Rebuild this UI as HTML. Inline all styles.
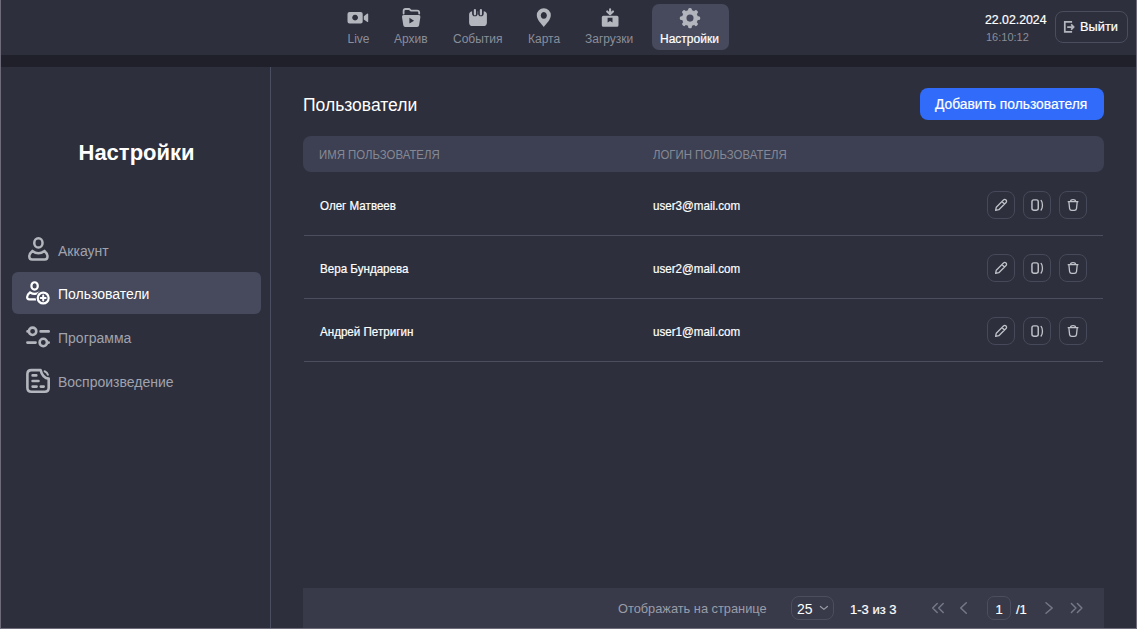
<!DOCTYPE html>
<html><head><meta charset="utf-8">
<style>
*{box-sizing:border-box;margin:0;padding:0}
html,body{width:1137px;height:629px;overflow:hidden;background:#2d2f3c;font-family:"Liberation Sans",sans-serif;}
.a{position:absolute;white-space:nowrap;line-height:1}
#frame{position:absolute;left:0;top:0;width:1137px;height:629px;border:1px solid #6d6b79;border-top:none;pointer-events:none;z-index:50}
#band{position:absolute;left:0;top:55px;width:1137px;height:12px;background:#1f2029}
#sep{position:absolute;left:270px;top:67px;width:1px;height:562px;background:#4a4e60}
.nav{color:#8a8e9a;font-size:12px}
.navact{position:absolute;left:652px;top:4px;width:77px;height:46px;border-radius:7px;background:#464a5c}
.side{color:#a0a3ae;font-size:14px}
.sideact{position:absolute;left:12px;top:272px;width:249px;height:42px;border-radius:6px;background:#464a5c}
.thead{position:absolute;left:303px;top:136px;width:801px;height:36px;border-radius:8px;background:#3d4052}
.th{color:#858995;font-size:12.6px;transform:scaleX(0.905);transform-origin:0 0}
.td{color:#ffffff;font-size:12.2px;-webkit-text-stroke:0.2px #fff;transform:scaleX(0.952);transform-origin:0 0}
.sb{-webkit-text-stroke:0.2px #fff}
.div{position:absolute;left:304px;width:799px;height:1px;background:#4b4e5e}
.btn{position:absolute;width:28px;height:28px;border:1px solid #464959;border-radius:8px}
.footer{position:absolute;left:303px;top:588px;width:801px;height:40px;background:#383a4a}
svg{position:absolute;overflow:visible}
</style></head><body>
<div id="band"></div>
<div id="sep"></div>

<!-- header nav -->
<div class="navact"></div>
<div class="a nav" style="left:347.5px;top:33.4px">Live</div>
<div class="a nav" style="left:394px;top:33.4px">Архив</div>
<div class="a nav" style="left:453px;top:33.4px">События</div>
<div class="a nav" style="left:528px;top:33.4px">Карта</div>
<div class="a nav" style="left:585px;top:33.4px">Загрузки</div>
<div class="a nav sb" style="left:660px;top:33.4px;color:#fff">Настройки</div>

<!-- date/time -->
<div class="a sb" style="left:985px;top:13.6px;font-size:12.3px;color:#fff">22.02.2024</div>
<div class="a" style="left:986px;top:31.5px;font-size:11px;color:#8a8d98">16:10:12</div>
<div class="a" style="left:1055px;top:11px;width:73px;height:32px;border:1px solid #4a4d5e;border-radius:8px"></div>
<div class="a sb" style="left:1080px;top:21px;font-size:12.8px;color:#fff">Выйти</div>

<!-- sidebar -->
<div class="a" style="left:78.5px;top:142.1px;font-size:22px;font-weight:bold;color:#fff">Настройки</div>
<div class="sideact"></div>
<div class="a side" style="left:58px;top:243.6px">Аккаунт</div>
<div class="a side" style="left:58px;top:287.1px;color:#fff">Пользователи</div>
<div class="a side" style="left:58px;top:331.3px">Программа</div>
<div class="a side" style="left:58px;top:375.2px">Воспроизведение</div>

<!-- main -->
<div class="a" style="left:303px;top:97.2px;font-size:17.5px;color:#fff">Пользователи</div>
<div class="a" style="left:920px;top:88px;width:184px;height:32px;border-radius:8px;background:#316bf9"></div>
<div class="a sb" style="left:935px;top:97.9px;font-size:13.8px;color:#fff">Добавить пользователя</div>

<div class="thead"></div>
<div class="a th" style="left:319px;top:149.3px">ИМЯ ПОЛЬЗОВАТЕЛЯ</div>
<div class="a th" style="left:653px;top:149.3px">ЛОГИН ПОЛЬЗОВАТЕЛЯ</div>

<div class="a td" style="left:320px;top:199.6px">Олег Матвеев</div>
<div class="a td" style="left:653px;top:199.6px">user3@mail.com</div>
<div class="div" style="top:235px"></div>
<div class="a td" style="left:320px;top:262.6px">Вера Бундарева</div>
<div class="a td" style="left:653px;top:262.6px">user2@mail.com</div>
<div class="div" style="top:298px"></div>
<div class="a td" style="left:320px;top:325.6px">Андрей Петригин</div>
<div class="a td" style="left:653px;top:325.6px">user1@mail.com</div>
<div class="div" style="top:361px"></div>

<div class="btn" style="left:987px;top:191px"></div>
<div class="btn" style="left:1023px;top:191px"></div>
<div class="btn" style="left:1059px;top:191px"></div>
<div class="btn" style="left:987px;top:254px"></div>
<div class="btn" style="left:1023px;top:254px"></div>
<div class="btn" style="left:1059px;top:254px"></div>
<div class="btn" style="left:987px;top:317px"></div>
<div class="btn" style="left:1023px;top:317px"></div>
<div class="btn" style="left:1059px;top:317px"></div>

<!-- footer -->
<div class="footer"></div>
<div class="a" style="left:618px;top:602.8px;font-size:12.8px;color:#9a9da8">Отображать на странице</div>
<div class="a" style="left:791px;top:596px;width:43px;height:24px;border:1px solid #4b4e5e;border-radius:8px"></div>
<div class="a" style="left:797px;top:602px;font-size:14px;color:#fff">25</div>
<div class="a sb" style="left:850px;top:602.8px;font-size:13px;color:#fff">1-3 из 3</div>
<div class="a" style="left:987px;top:596px;width:24px;height:24px;border:1px solid #4b4e5e;border-radius:7px"></div>
<div class="a sb" style="left:995.5px;top:602.8px;font-size:13px;color:#fff">1</div>
<div class="a sb" style="left:1016px;top:602.8px;font-size:13px;color:#fff">/1</div>

<svg id="ic" width="1137" height="629" viewBox="0 0 1137 629" style="position:absolute;left:0;top:0;z-index:5">
<g fill="#b4b6bd">
<!-- camera -->
<path fill-rule="evenodd" d="M349.5 12h11.2a2 2 0 0 1 2 2v7.6a2 2 0 0 1-2 2h-11.2a2 2 0 0 1-2-2v-7.6a2 2 0 0 1 2-2z M355.1 14.7a2.9 2.9 0 1 0 0.01 0z"/>
<path d="M363.8 16.2L367 13.8Q368.2 13 368.2 14.4V21.2Q368.2 22.6 367 21.8L363.8 19.4Z"/>
<!-- folder -->
<path fill="none" stroke="#b4b6bd" stroke-width="1.8" stroke-linecap="round" stroke-linejoin="round" d="M403.6 13.6V11a2 2 0 0 1 2-2h3.6l1.8 1.6h6.2a2 2 0 0 1 2 2v1"/>
<path fill-rule="evenodd" d="M403.8 15h14.8a1.8 1.8 0 0 1 1.8 2l-1.3 8.2a2 2 0 0 1-2 1.7h-11.8a2 2 0 0 1-2-1.7l-1.3-8.2a1.8 1.8 0 0 1 1.8-2z M409.4 17.8v5.8l4.7-2.9z"/>
<!-- calendar -->
<rect x="469.1" y="11.2" width="17.8" height="14.9" rx="3.6"/>
<rect x="472.1" y="8" width="5.6" height="8.3" rx="2.8" fill="#2d2f3c"/>
<rect x="478.1" y="8" width="5.6" height="8.3" rx="2.8" fill="#2d2f3c"/>
<rect x="473.8" y="8.9" width="2.2" height="6.5" rx="1.1"/>
<rect x="479.8" y="8.9" width="2.2" height="6.5" rx="1.1"/>
<!-- pin -->
<path fill-rule="evenodd" d="M543.8 26.9C541.5 24 536.8 19.8 536.8 15.3a7 7 0 0 1 14 0C550.8 19.8 546.1 24 543.8 26.9z M543.8 12.1a3.05 3.35 0 1 0 0.01 0z"/>
<!-- download -->
<path fill-rule="evenodd" d="M603.3 15.8h13.7a1.5 1.5 0 0 1 1.5 1.5v7.9a1.5 1.5 0 0 1-1.5 1.5h-13.7a1.5 1.5 0 0 1-1.5-1.5v-7.9a1.5 1.5 0 0 1 1.5-1.5z M607.6 17.8v4.8l2.45-1.5 2.45 1.5v-4.8z"/>
<path fill="none" stroke="#b4b6bd" stroke-width="2.1" stroke-linecap="round" stroke-linejoin="round" d="M610.1 9.2v5M607.2 11.4l2.9 2.9 2.9-2.9"/>
<!-- gear -->
<circle cx="690" cy="18.1" r="8.0"/><rect x="688.1" y="7.9" width="3.8" height="5" rx="1.5" transform="rotate(0 690 18.1)"/><rect x="688.1" y="7.9" width="3.8" height="5" rx="1.5" transform="rotate(45 690 18.1)"/><rect x="688.1" y="7.9" width="3.8" height="5" rx="1.5" transform="rotate(90 690 18.1)"/><rect x="688.1" y="7.9" width="3.8" height="5" rx="1.5" transform="rotate(135 690 18.1)"/><rect x="688.1" y="7.9" width="3.8" height="5" rx="1.5" transform="rotate(180 690 18.1)"/><rect x="688.1" y="7.9" width="3.8" height="5" rx="1.5" transform="rotate(225 690 18.1)"/><rect x="688.1" y="7.9" width="3.8" height="5" rx="1.5" transform="rotate(270 690 18.1)"/><rect x="688.1" y="7.9" width="3.8" height="5" rx="1.5" transform="rotate(315 690 18.1)"/><circle cx="690" cy="18.1" r="3.55" fill="#464a5c"/>
</g>
<!-- logout -->
<g fill="none" stroke="#b4b6bd" stroke-width="1.75">
<path d="M1072.1 21.8h-7.3v10.1h7.3"/>
<path d="M1067.2 27h6.5M1071.1 24.3l2.7 2.7-2.7 2.7" stroke-linejoin="round"/>
</g>
</svg>
<svg id="ic2" width="1137" height="629" viewBox="0 0 1137 629" style="position:absolute;left:0;top:0;z-index:6">
<!-- sidebar icons -->
<g fill="none" stroke="#b4b6bd" stroke-width="2.5" stroke-linecap="round" stroke-linejoin="round">
<ellipse cx="38.4" cy="242.9" rx="4.15" ry="4.65"/>
<path d="M32.4 250.9Q38.4 255.6 44.5 250.9Q47.5 253.3 47.5 256.6Q47.5 259.6 44.8 259.6H32.1Q29.3 259.6 29.3 256.6Q29.3 253.3 32.4 250.9Z"/>
</g>
<g fill="none" stroke="#ffffff" stroke-width="2.2" stroke-linecap="round" stroke-linejoin="round">
<ellipse cx="34.6" cy="285.9" rx="3.2" ry="3.65"/>
<path d="M30 292.3Q34.5 295.4 39 292.6M30 292.3Q27.1 294.5 27.1 297Q27.1 299.3 29.3 299.3H37.5"/>
</g>
<circle cx="43.2" cy="298" r="7.6" fill="#464a5c"/>
<g fill="none" stroke="#ffffff" stroke-width="2.2" stroke-linecap="round">
<circle cx="43.2" cy="298" r="5.45"/>
<path d="M40.7 298h5M43.2 295.5v5" stroke-width="2"/>
</g>
<g fill="none" stroke="#b4b6bd" stroke-width="2.6" stroke-linecap="round">
<circle cx="32.6" cy="331.3" r="3.7"/>
<path d="M40.6 331.4h8.1M27.5 331.4h0.1M27.4 342.6h8.2M48.6 342.6h0.1"/>
<circle cx="43.3" cy="342.5" r="3.7"/>
</g>
<g fill="none" stroke="#b4b6bd" stroke-width="2.6" stroke-linecap="round" stroke-linejoin="round">
<path d="M40.6 370.1H31.4Q27.4 370.1 27.4 374.1V387.7Q27.4 391.7 31.4 391.7H44.7Q48.7 391.7 48.7 387.7V378.6Q42.6 378.2 40.6 370.1Z"/>
<path d="M44.6 371.2Q47.3 372.3 47.9 374.8" stroke-width="2"/>
<path d="M32.6 375.4h3.7M32.6 381h5.9M32.6 386.6h4M40.8 386.6h2.9"/>
</g>
<!-- action icons -->
<g fill="none" stroke="#c0c2c8" stroke-width="1.3" stroke-linejoin="round" stroke-linecap="round">
<g id="acts">
<g transform="translate(1000.8 205.2) rotate(-45)"><path d="M-7.3 0L-4.6 -1.8H5.6A1.8 1.8 0 0 1 5.6 1.8H-4.6Z M3.4 -1.8V1.8"/></g>
<rect x="1031.95" y="199.85" width="6.3" height="10.3" rx="1.8" stroke-width="1.45"/>
<path d="M1041.1 200.4C1042.9 202.6 1042.9 207.8 1041.1 210"/>
<path d="M1068.2 201.7H1077.9M1070.5 201.5Q1070.7 199.7 1073.05 199.7Q1075.4 199.7 1075.6 201.5M1068.9 202L1069.6 208.6Q1069.9 210.3 1071.6 210.3H1074.5Q1076.2 210.3 1076.5 208.6L1077.2 202"/>
</g>
<use href="#acts" y="63"/>
<use href="#acts" y="126"/>
</g>
<!-- pagination -->
<g fill="none" stroke="#757887" stroke-width="1.5" stroke-linecap="round" stroke-linejoin="round">
<path d="M937.2 603.5L932.7 608L937.2 612.5M943.2 603.5L938.7 608L943.2 612.5"/>
<path d="M966.3 602.7L960.7 608L966.3 613.3"/>
<path d="M1046 602.7L1052.2 608L1046 613.3"/>
<path d="M1071.4 603.5L1075.9 608L1071.4 612.5M1077.4 603.5L1081.9 608L1077.4 612.5"/>
</g>
<path d="M820.4 606.5L823.9 609.4L827.4 606.5" fill="none" stroke="#9a9ca6" stroke-width="1.2" stroke-linecap="round" stroke-linejoin="round"/>
</svg>
<div id="frame"></div>
</body></html>
